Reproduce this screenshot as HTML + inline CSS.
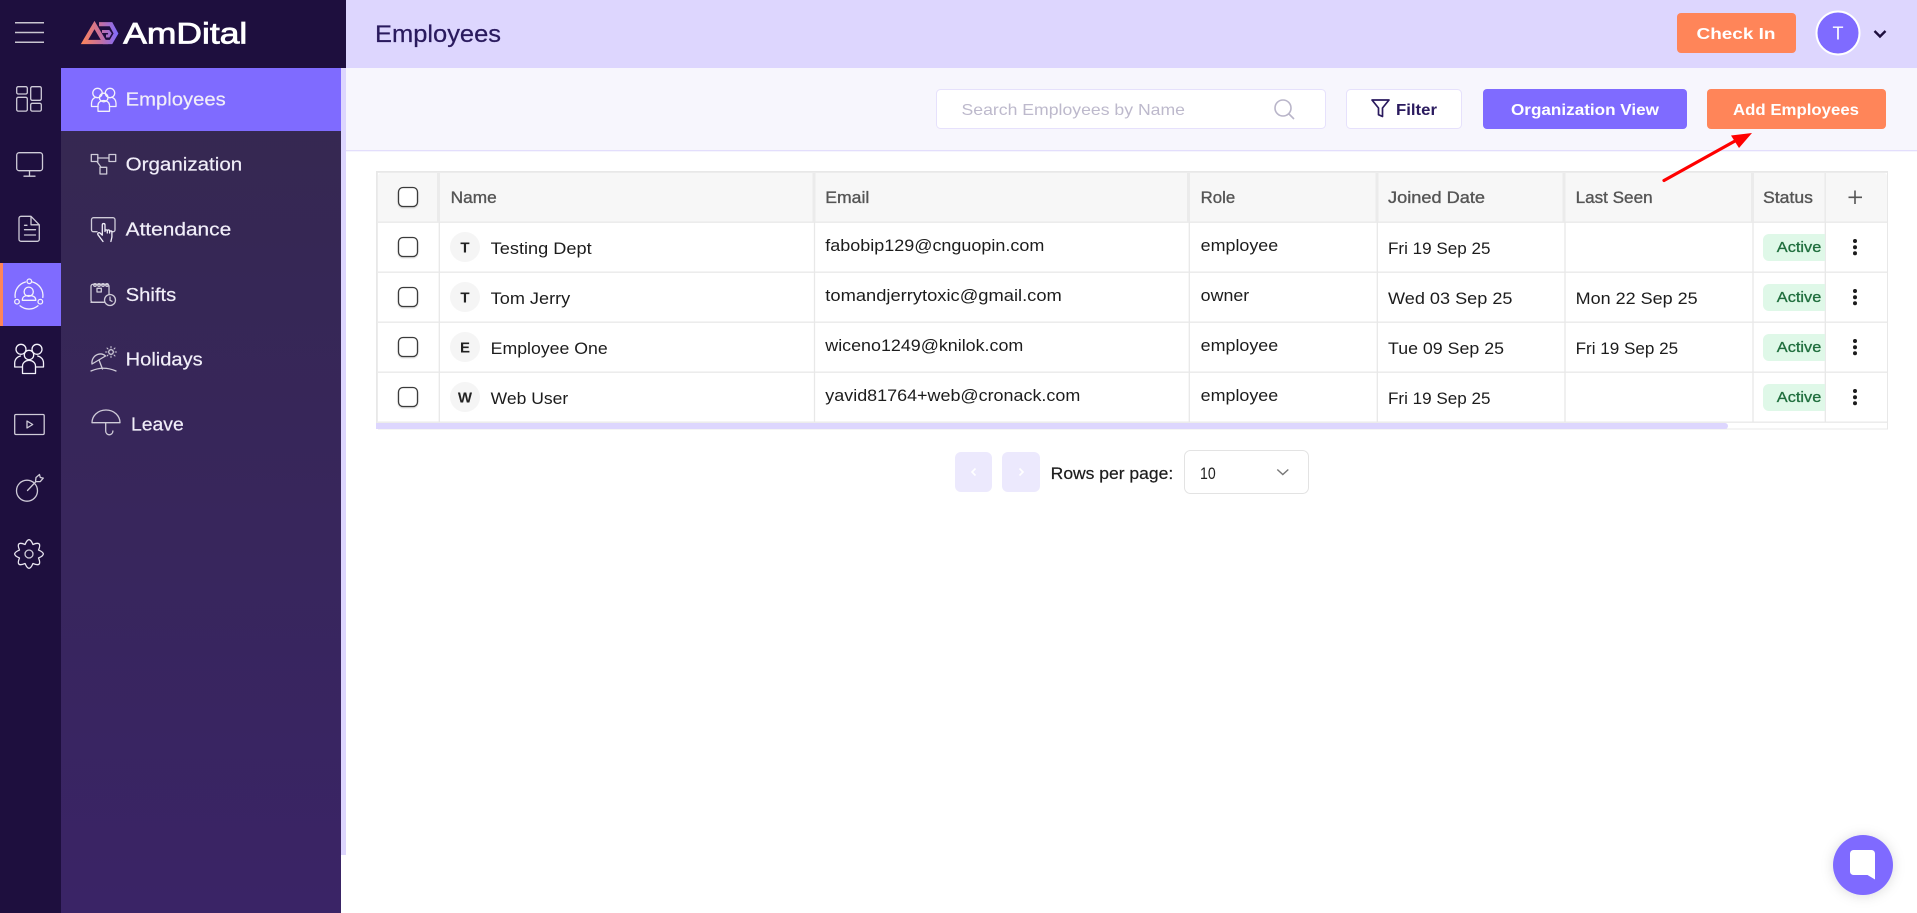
<!DOCTYPE html>
<html lang="en"><head><meta charset="utf-8"><title>Employees</title>
<style>
html,body{margin:0;padding:0;width:1917px;height:913px;overflow:hidden;background:#fff}
svg{display:block;font-family:"Liberation Sans",sans-serif}
.ic{fill:none;stroke:#cfcbd8;stroke-width:1.3;stroke-linecap:round;stroke-linejoin:round}
.w{fill:none;stroke:#f4f2fb;stroke-width:1.3;stroke-linecap:round;stroke-linejoin:round}
.nav{fill:#f1eef9;font-size:18.5px;stroke:#f1eef9;stroke-width:.2}
.th{fill:#555;font-size:16.5px;stroke:#555;stroke-width:.35}
.td{fill:#1c1c1c;font-size:16.5px}
.av{fill:#222;font-size:15px;font-weight:700;text-anchor:middle}
.ac{fill:#1f6e3d;font-size:15px;stroke:#1f6e3d;stroke-width:.3}
.btn{fill:#fff;font-size:16px;font-weight:700}
.cb{fill:#fff;stroke:#3a3a3a;stroke-width:1.3;filter:url(#s)}
.bd{fill:#dff8e8}
.ln{stroke:#e8e8e8;stroke-width:1.3}
.hl{fill:#ebebeb}
.dot{fill:#1c1c1c}
</style></head><body>
<svg width="1917" height="913" viewBox="0 0 1917 913" xmlns="http://www.w3.org/2000/svg">
<defs>
<linearGradient id="sb" x1="0" y1="0" x2="0" y2="1"><stop offset="0" stop-color="#352850"/><stop offset="1" stop-color="#3a2466"/></linearGradient>
<linearGradient id="lg" gradientUnits="userSpaceOnUse" x1="81" y1="0" x2="118" y2="0"><stop offset="0" stop-color="#ff8559"/><stop offset=".5" stop-color="#c9709a"/><stop offset="1" stop-color="#7f6bff"/></linearGradient>
<filter id="s" x="-30%" y="-30%" width="160%" height="170%"><feDropShadow dx="0" dy="1" stdDeviation=".7" flood-color="#000" flood-opacity=".2"/></filter>
<filter id="cs" x="-40%" y="-40%" width="180%" height="180%"><feDropShadow dx="0" dy="1" stdDeviation="6" flood-color="#000" flood-opacity=".14"/></filter>
<clipPath id="bc"><rect x="1755" y="225" width="70" height="200"/></clipPath>
</defs>

<!-- header -->
<rect x="346" y="0" width="1571" height="68" fill="#ddd6fe"/>
<rect x="346" y="68" width="1571" height="82" fill="#f7f6fd"/>
<rect x="346" y="150" width="1571" height="1.3" fill="#e3defc"/>
<text x="375" y="42" font-size="24" fill="#2a1a5e" stroke="#2a1a5e" stroke-width=".25" textLength="126" lengthAdjust="spacingAndGlyphs">Employees</text>
<rect x="1677" y="13" width="119" height="40" rx="4" fill="#ff8559"/>
<text x="1696.5" y="39" class="btn" textLength="79" lengthAdjust="spacingAndGlyphs">Check In</text>
<circle cx="1838" cy="33" r="21.5" fill="#7f6bff" stroke="#fff" stroke-width="2"/>
<text x="1838" y="39.5" fill="#fff" font-size="18" text-anchor="middle">T</text>
<path d="M1874.5 31l5.5 5.5 5.5-5.5" fill="none" stroke="#1e0f3e" stroke-width="2.4"/>

<!-- toolbar -->
<rect x="936.5" y="89.5" width="389" height="39" rx="4" fill="#fff" stroke="#e6e1fc"/>
<text x="961.5" y="115" font-size="16" fill="#bdb9cc" textLength="223.5" lengthAdjust="spacingAndGlyphs">Search Employees by Name</text>
<circle cx="1283" cy="108" r="8" fill="none" stroke="#b9b5c9" stroke-width="1.6"/>
<path d="M1289 114l5 5" stroke="#b9b5c9" stroke-width="1.6"/>
<rect x="1346.5" y="89.5" width="115" height="39" rx="4" fill="#fff" stroke="#e6e1fc"/>
<path d="M1372 100h17l-6.5 8v8.500l-4-1.800v-6.700z" fill="none" stroke="#2a1a5e" stroke-width="1.700" stroke-linejoin="round"/>
<text x="1396" y="115" font-size="16" font-weight="700" fill="#2a1a5e" textLength="41" lengthAdjust="spacingAndGlyphs">Filter</text>
<rect x="1483" y="89" width="204" height="40" rx="4" fill="#7f6bff"/>
<text x="1511" y="115" class="btn" textLength="148" lengthAdjust="spacingAndGlyphs">Organization View</text>
<rect x="1707" y="89" width="179" height="40" rx="4" fill="#ff8559"/>
<text x="1733" y="115" class="btn" textLength="126" lengthAdjust="spacingAndGlyphs">Add Employees</text>

<!-- table -->
<rect x="376" y="171" width="1512" height="258" rx="3" fill="#fff"/>
<path d="M378 176a3 3 0 0 1 3-3H1884a3 3 0 0 1 3 3V222H378z" fill="#f7f7f7"/>
<rect x="376" y="171" width="1512" height="1.800" fill="#e8e8e8"/>
<rect x="376" y="171" width="1.800" height="258" fill="#e8e8e8"/>
<rect x="1887" y="171" width="1" height="258" fill="#e8e8e8"/>
<rect x="378" y="221.500" width="1510" height="1.300" fill="#e8e8e8"/>
<rect x="378" y="271.500" width="1510" height="1.300" fill="#e8e8e8"/>
<rect x="378" y="321.500" width="1510" height="1.300" fill="#e8e8e8"/>
<rect x="378" y="371.500" width="1510" height="1.300" fill="#e8e8e8"/>
<rect x="378" y="421.500" width="1510" height="1.300" fill="#e8e8e8"/>
<rect x="378" y="428.500" width="1510" height="1" fill="#e8e8e8"/>
<!-- header resizers -->
<rect class="hl" x="437" y="173" width="3" height="49"/><rect class="hl" x="812.500" y="173" width="3" height="49"/><rect class="hl" x="1187" y="173" width="3" height="49"/><rect class="hl" x="1375.500" y="173" width="3" height="49"/><rect class="hl" x="1562.500" y="173" width="3" height="49"/><rect class="hl" x="1751" y="173" width="3" height="49"/>
<rect x="1824.500" y="173" width="1.300" height="49" fill="#e8e8e8"/>
<!-- body lines -->
<path class="ln" d="M439.300 222V422M814.500 222V422M1189.300 222V422M1377.300 222V422M1565 222V422M1753 222V422M1825.300 222V422"/>
<!-- scrollbar -->
<rect x="378" y="423" width="1350" height="6" rx="3" fill="#ddd6fe"/>
<rect x="376" y="423" width="6" height="6" fill="#ddd6fe"/>

<!-- header text -->
<rect class="cb" x="398.500" y="187.500" width="19" height="19" rx="4.500"/>
<text class="th" x="450.700" y="203" textLength="46" lengthAdjust="spacingAndGlyphs">Name</text>
<text class="th" x="825.300" y="203" textLength="44" lengthAdjust="spacingAndGlyphs">Email</text>
<text class="th" x="1200.700" y="203" textLength="34.500" lengthAdjust="spacingAndGlyphs">Role</text>
<text class="th" x="1388" y="203" textLength="97" lengthAdjust="spacingAndGlyphs">Joined Date</text>
<text class="th" x="1575.600" y="203" textLength="77" lengthAdjust="spacingAndGlyphs">Last Seen</text>
<text class="th" x="1763" y="203" textLength="50" lengthAdjust="spacingAndGlyphs">Status</text>
<path d="M1855 190.500v13.500M1848.500 197.300h13.500" stroke="#555" stroke-width="1.600"/>

<!-- row 1 -->
<rect class="cb" x="398.500" y="237.500" width="19" height="19" rx="4.500"/>
<circle cx="465" cy="247" r="15" fill="#f5f5f5"/><text class="av" x="465" y="252.500">T</text>
<text class="td" x="490.700" y="254" textLength="101" lengthAdjust="spacingAndGlyphs">Testing Dept</text>
<text class="td" x="825.300" y="251" textLength="219" lengthAdjust="spacingAndGlyphs">fabobip129@cnguopin.com</text>
<text class="td" x="1200.700" y="251" textLength="77.500" lengthAdjust="spacingAndGlyphs">employee</text>
<text class="td" x="1388" y="254" textLength="102.500" lengthAdjust="spacingAndGlyphs">Fri 19 Sep 25</text>
<g clip-path="url(#bc)"><rect class="bd" x="1763" y="234" width="80" height="27" rx="6"/></g>
<text class="ac" x="1776.800" y="252" textLength="44.500" lengthAdjust="spacingAndGlyphs">Active</text>
<circle class="dot" cx="1855" cy="241" r="2"/><circle class="dot" cx="1855" cy="247.300" r="2"/><circle class="dot" cx="1855" cy="253.300" r="2"/>

<!-- row 2 -->
<rect class="cb" x="398.500" y="287.500" width="19" height="19" rx="4.500"/>
<circle cx="465" cy="297" r="15" fill="#f5f5f5"/><text class="av" x="465" y="302.500">T</text>
<text class="td" x="490.700" y="304" textLength="79.500" lengthAdjust="spacingAndGlyphs">Tom Jerry</text>
<text class="td" x="825.300" y="301" textLength="236.500" lengthAdjust="spacingAndGlyphs">tomandjerrytoxic@gmail.com</text>
<text class="td" x="1200.700" y="301" textLength="48.500" lengthAdjust="spacingAndGlyphs">owner</text>
<text class="td" x="1388" y="304" textLength="124.500" lengthAdjust="spacingAndGlyphs">Wed 03 Sep 25</text>
<text class="td" x="1575.600" y="304" textLength="122" lengthAdjust="spacingAndGlyphs">Mon 22 Sep 25</text>
<g clip-path="url(#bc)"><rect class="bd" x="1763" y="284" width="80" height="27" rx="6"/></g>
<text class="ac" x="1776.800" y="302" textLength="44.500" lengthAdjust="spacingAndGlyphs">Active</text>
<circle class="dot" cx="1855" cy="291" r="2"/><circle class="dot" cx="1855" cy="297.300" r="2"/><circle class="dot" cx="1855" cy="303.300" r="2"/>

<!-- row 3 -->
<rect class="cb" x="398.500" y="337.500" width="19" height="19" rx="4.500"/>
<circle cx="465" cy="347" r="15" fill="#f5f5f5"/><text class="av" x="465" y="352.500">E</text>
<text class="td" x="490.700" y="354" textLength="117" lengthAdjust="spacingAndGlyphs">Employee One</text>
<text class="td" x="825.300" y="351" textLength="198" lengthAdjust="spacingAndGlyphs">wiceno1249@knilok.com</text>
<text class="td" x="1200.700" y="351" textLength="77.500" lengthAdjust="spacingAndGlyphs">employee</text>
<text class="td" x="1388" y="354" textLength="116" lengthAdjust="spacingAndGlyphs">Tue 09 Sep 25</text>
<text class="td" x="1575.600" y="354" textLength="102.500" lengthAdjust="spacingAndGlyphs">Fri 19 Sep 25</text>
<g clip-path="url(#bc)"><rect class="bd" x="1763" y="334" width="80" height="27" rx="6"/></g>
<text class="ac" x="1776.800" y="352" textLength="44.500" lengthAdjust="spacingAndGlyphs">Active</text>
<circle class="dot" cx="1855" cy="341" r="2"/><circle class="dot" cx="1855" cy="347.300" r="2"/><circle class="dot" cx="1855" cy="353.300" r="2"/>

<!-- row 4 -->
<rect class="cb" x="398.500" y="387.500" width="19" height="19" rx="4.500"/>
<circle cx="465" cy="397" r="15" fill="#f5f5f5"/><text class="av" x="465" y="402.500">W</text>
<text class="td" x="490.700" y="404" textLength="77.500" lengthAdjust="spacingAndGlyphs">Web User</text>
<text class="td" x="825.300" y="401" textLength="255" lengthAdjust="spacingAndGlyphs">yavid81764+web@cronack.com</text>
<text class="td" x="1200.700" y="401" textLength="77.500" lengthAdjust="spacingAndGlyphs">employee</text>
<text class="td" x="1388" y="404" textLength="102.500" lengthAdjust="spacingAndGlyphs">Fri 19 Sep 25</text>
<g clip-path="url(#bc)"><rect class="bd" x="1763" y="384" width="80" height="27" rx="6"/></g>
<text class="ac" x="1776.800" y="402" textLength="44.500" lengthAdjust="spacingAndGlyphs">Active</text>
<circle class="dot" cx="1855" cy="391" r="2"/><circle class="dot" cx="1855" cy="397.300" r="2"/><circle class="dot" cx="1855" cy="403.300" r="2"/>

<!-- annotation arrow (over table) -->
<path d="M1664 180.500L1735 141" stroke="#f00" stroke-width="3.200" stroke-linecap="round"/>
<path d="M1752 133L1731 135.500 1739 148z" fill="#f00"/>

<!-- pagination -->
<rect x="955" y="452" width="37" height="40" rx="6" fill="#ece9fd"/>
<path d="M975.500 468.500l-3.500 3.500 3.500 3.500" fill="none" stroke="#fff" stroke-width="1.600"/>
<rect x="1002" y="452" width="38" height="40" rx="6" fill="#ece9fd"/>
<path d="M1019.500 468.500l3.500 3.500-3.500 3.500" fill="none" stroke="#fff" stroke-width="1.600"/>
<text x="1050.700" y="479" font-size="16.500" fill="#1c1c1c" stroke="#1c1c1c" stroke-width=".2" textLength="122.500" lengthAdjust="spacingAndGlyphs">Rows per page:</text>
<rect x="1184.500" y="450.500" width="124" height="43" rx="6" fill="#fff" stroke="#e3e3e3"/>
<text x="1200" y="479" font-size="17" fill="#222" textLength="15.700" lengthAdjust="spacingAndGlyphs">10</text>
<path d="M1277.300 469.500l5.500 5 5.500-5" fill="none" stroke="#777" stroke-width="1.400"/>

<!-- chat -->
<circle cx="1863" cy="865" r="30" fill="#7f6bff" filter="url(#cs)"/>
<path d="M1853.500 850h18a3.500 3.500 0 0 1 3.500 3.500v26l-7.500-4.500h-14a3.500 3.500 0 0 1-3.500-3.500v-18a3.500 3.500 0 0 1 3.500-3.500z" fill="#fff"/>

<!-- left rail + sidebar -->
<rect x="0" y="0" width="346" height="68" fill="#1e0f3e"/>
<rect x="0" y="68" width="61" height="845" fill="#1e0f3e"/>
<rect x="61" y="68" width="280" height="845" fill="url(#sb)"/>
<rect x="341" y="68" width="5" height="787" fill="#ddd6fe"/>
<rect x="61" y="68" width="280" height="63" fill="#7f6bff"/>
<rect x="0" y="263" width="61" height="63" fill="#7f6bff"/>
<rect x="0" y="263" width="3" height="63" fill="#ff8559"/>

<!-- hamburger -->
<path d="M15 22.700h29M15 32.500h29M15 42.300h29" stroke="#c9c6d0" stroke-width="1.500"/>

<!-- logo -->
<g fill="none" stroke="url(#lg)" stroke-width="4.200" stroke-linejoin="miter">
<path d="M84.500 42L94.500 25 104.500 42z"/>
<path d="M99 24.200h12l5 9.300-5 8.500H103"/>
<path d="M102 31.500h6.500l1.500 2-1.500 2.500h-2.500" stroke-width="3"/>
</g>
<text x="123.300" y="43.500" font-size="30" fill="#fff" stroke="#fff" stroke-width=".8" textLength="124" lengthAdjust="spacingAndGlyphs">AmDital</text>

<!-- rail icons -->
<g class="ic">
<rect x="16.700" y="86.700" width="10.600" height="7.300" rx="1.500"/>
<rect x="16.700" y="97.300" width="10.600" height="13.800" rx="1.500"/>
<rect x="30.700" y="86.700" width="10.600" height="13.600" rx="1.500"/>
<rect x="30.700" y="103.300" width="10.600" height="7.800" rx="1.500"/>
<rect x="16.700" y="152.700" width="25.800" height="18" rx="2.500"/>
<path d="M29.500 170.700v5.500M24 176.200h11"/>
<path d="M21 216.300h10l8.300 8.500v14.500a2 2 0 0 1-2 2H21a2 2 0 0 1-2-2v-21a2 2 0 0 1 2-2zM31 216.500v8.300h8M24.500 225.300h2.500M24.500 229.700h11M24.500 235h11"/>
</g>
<g class="w">
<path d="M25.500 282A14 14 0 0 0 15.200 297.500M20 305.800A14 14 0 0 0 38 305.800M42.800 297.500A14 14 0 0 0 32.500 282"/>
<circle cx="29.300" cy="281.300" r="2.300"/><circle cx="17" cy="301.700" r="2.300"/><circle cx="40.300" cy="301.700" r="2.300"/>
<circle cx="28.700" cy="291.700" r="4.600"/>
<path d="M22.300 300.300c0-3.800 2.500-4.800 6.500-4.800s7 1 7 4.800z"/>
<!-- team -->
<circle cx="21" cy="349.300" r="5"/><circle cx="37" cy="349.300" r="5"/><circle cx="29" cy="355" r="4.700"/>
<path d="M22.500 373.500v-7.500c0-3 3-5.700 6.500-5.700s6.500 2.700 6.500 5.700v7.500z"/>
<path d="M22 367H14.700v-4c0-3.700 2.700-6.400 5.800-7M36 367h7.500v-4c0-3.700-2.700-6.400-5.800-7"/>
</g>
<g class="ic">
<rect x="14.700" y="414.500" width="29.500" height="20" rx="1.200"/>
<path d="M27 421v7l5.700-3.500z"/>
<circle cx="27" cy="490.700" r="10.500"/>
<path d="M27.500 490.500L36 481.500M35.500 481.500l.5-4 3.500-3 .8 3 3 .6-3 3.500z"/>
<circle cx="29" cy="554" r="4"/>
<path d="M38.520 550.060Q48.100 554 38.520 557.940Q42.500 567.500 32.940 563.520Q29 573.100 25.060 563.520Q15.500 567.500 19.480 557.940Q9.900 554 19.480 550.060Q15.500 540.500 25.060 544.480Q29 534.900 32.940 544.480Q42.500 540.500 38.520 550.060Z" stroke="#e9e6f0"/>
</g>

<!-- sidebar icons -->
<g class="w">
<circle cx="97.500" cy="93" r="4.700"/><circle cx="110" cy="93" r="4.700"/><circle cx="103.700" cy="97.500" r="4.300"/>
<path d="M98 111.300v-6c0-2.800 2.500-4.800 5.700-4.800s5.800 2 5.800 4.800v6z"/>
<path d="M98 106.500h-6.500V103c0-3 2-5.300 4.500-5.800M109.500 106.500h6.500V103c0-3-2-5.300-4.500-5.800"/>
</g>
<g class="ic">
<rect x="91.300" y="154.500" width="6.500" height="7"/>
<rect x="109" y="154.500" width="6.700" height="7"/>
<rect x="100" y="167.300" width="6.700" height="6.700"/>
<path d="M97.800 158h11.200M97 161.500l4 5.800"/>
<!-- attendance -->
<path d="M97 231.700h-3.500a2 2 0 0 1-2-2v-10a2 2 0 0 1 2-2h19.500a2 2 0 0 1 2 2v10a2 2 0 0 1-2 2h-1"/>
<path d="M103 241.500l-5-6.700c-.9-1.300.7-2.800 2-1.800l2.300 2.200V225c0-1.900 2.700-1.900 2.700 0v6.500M105 231c0-1.500 2.300-1.500 2.300 0v2M107.300 231c0-1.500 2.300-1.500 2.300 0v2M109.600 232c0-1.400 2.300-1.400 2.300 0v5l-1 4.500" stroke="#f0edf8"/>
<!-- shifts -->
<path d="M104 302.300H93a2 2 0 0 1-2-2v-14a2 2 0 0 1 2-2h14a2 2 0 0 1 2 2v8.500"/>
<circle cx="95" cy="285" r="1.300"/><circle cx="99" cy="285" r="1.300"/><circle cx="103" cy="285" r="1.300"/><circle cx="107" cy="285" r="1.300"/>
<rect x="97" y="288.300" width="4.300" height="3.700"/>
<circle cx="110" cy="300" r="5.500"/><path d="M110 297v3.300l2 1"/>
<path d="M91 302.300h13"/>
<!-- holidays -->
<circle cx="111" cy="352" r="2.300"/>
<path d="M111 346.500v1.500M111 356v1.500M105.500 352h1.500M115 352h1.500M107 348l1 1M114 355l1 1M115 348l-1 1M108 355l-1 1" stroke-width="1"/>
<path d="M91 371c8-3.500 17-3.500 25 0"/>
<path d="M92 364c-.5-4 1.500-8 5.500-9.500 3-1 6-.5 8 1.500z"/>
<path d="M99 360l3.500 9"/>
<!-- leave -->
<path d="M92 422.700c0-7 6-12.700 14-12.700s14 5.700 14 12.700zM105.700 422.700v8.300c0 2.200 1.600 3.800 3.600 3.800s3.600-1.600 3.600-3.800"/>
</g>

<!-- nav text -->
<text class="nav" x="125.700" y="105.700" textLength="100" lengthAdjust="spacingAndGlyphs">Employees</text>
<text class="nav" x="125.700" y="170.700" textLength="116.500" lengthAdjust="spacingAndGlyphs">Organization</text>
<text class="nav" x="125.700" y="235.700" textLength="105.500" lengthAdjust="spacingAndGlyphs">Attendance</text>
<text class="nav" x="125.700" y="301" textLength="50.500" lengthAdjust="spacingAndGlyphs">Shifts</text>
<text class="nav" x="125.700" y="365.700" textLength="77" lengthAdjust="spacingAndGlyphs">Holidays</text>
<text class="nav" x="131" y="430.700" textLength="52.700" lengthAdjust="spacingAndGlyphs">Leave</text>
</svg>
</body></html>
